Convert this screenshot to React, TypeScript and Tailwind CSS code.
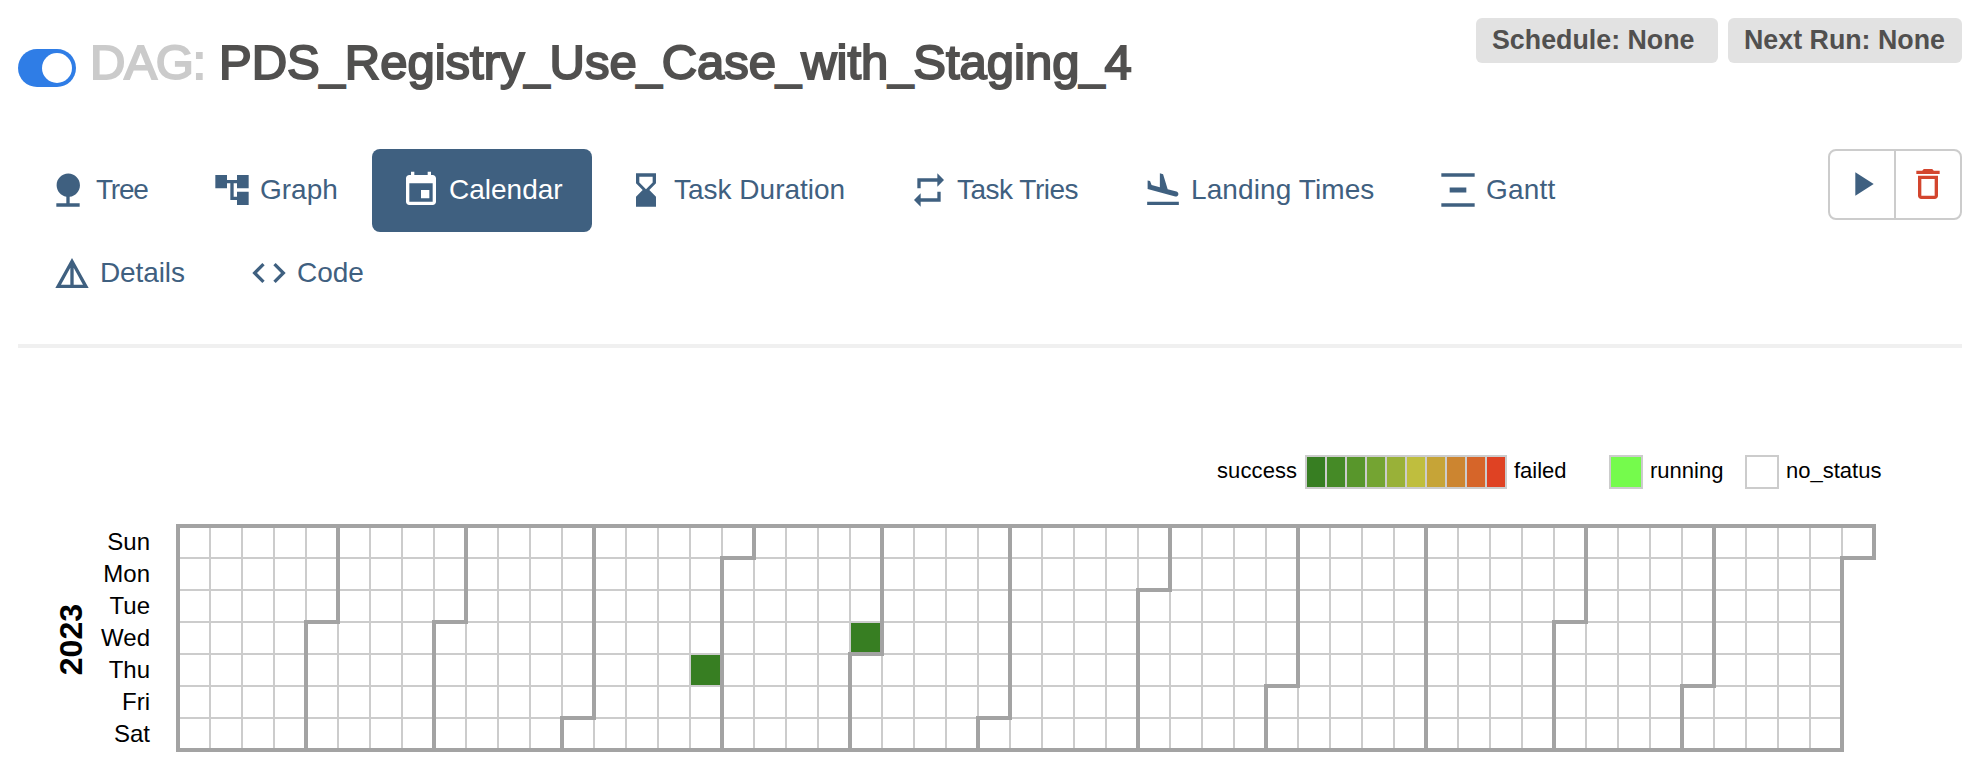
import React from "react";

type IconProps = { d: string; className?: string };

const Icon = ({ d, className = "" }: IconProps) => (
  <svg viewBox="0 0 24 24" fill="currentColor" className={`size-10 shrink-0 ${className}`}>
    <path d={d} />
  </svg>
);

const ICONS = {
  tree: "M13 16.12c3.47-.41 6.17-3.36 6.17-6.95 0-3.87-3.13-7-7-7s-7 3.13-7 7c0 3.47 2.52 6.34 5.83 6.89V20H5v2h14v-2h-6v-3.88z",
  graph: "M22 11V3h-7v3H9V3H2v8h7V8h2v10h4v3h7v-8h-7v3h-2V8h2v3z",
  calendar:
    "M17 12h-5v5h5v-5zM16 1v2H8V1H6v2H5c-1.11 0-1.99.9-1.99 2L3 19c0 1.1.89 2 2 2h14c1.1 0 2-.9 2-2V5c0-1.1-.9-2-2-2h-1V1h-2zm3 18H5V8h14v11z",
  hourglass: "m18 22-.01-6L14 12l3.99-4.01L18 2H6v6l4 4-4 3.99V22h12zM8 7.5V4h8v3.5l-4 4-4-4z",
  repeat: "M7 7h10v3l4-4-4-4v3H5v6h2V7zm10 10H7v-3l-4 4 4 4v-3h12v-6h-2v4z",
  landing:
    "M2.5 19h19v2h-19v-2zm16.84-3.15c.8.21 1.62-.26 1.84-1.06.21-.8-.26-1.62-1.06-1.84l-5.31-1.42-2.76-9.02L10.12 2v8.28L5.15 8.95l-.93-2.32-1.45-.39v5.17l16.57 4.44z",
  gantt: "M22 2v2H2V2h20zM7 10.5v3h10v-3H7zM2 20v2h20v-2H2z",
  details: "M12 3 2 21h20L12 3zm1 5.92L18.6 19H13V8.92zm-2 0V19H5.4L11 8.92z",
  code: "M9.4 16.6 4.8 12l4.6-4.6L8 6l-6 6 6 6 1.4-1.4zm5.2 0 4.6-4.6-4.6-4.6L16 6l6 6-6 6-1.4-1.4z",
  play: "M8 5v14l11-7z",
  trash:
    "M6 19c0 1.1.9 2 2 2h8c1.1 0 2-.9 2-2V7H6v12zM8 9h8v10H8V9zm7.5-5l-1-1h-5l-1 1H5v2h14V4z",
};

type TabProps = { icon: string; label: string; className: string; active?: boolean };

const Tab = ({ icon, label, className, active }: TabProps) => (
  <a
    className={`flex h-[83px] shrink-0 items-start rounded-lg pt-[21px] text-[28px] leading-10 whitespace-nowrap ${
      active ? "bg-[#3f6080] text-white" : "text-[#3f6080]"
    } ${className}`}
  >
    <Icon d={icon} />
    <span className="ml-2">{label}</span>
  </a>
);

const DAG_ID = "PDS_Registry_Use_Case_with_Staging_4";

const DagName = () => (
  <span>
    {DAG_ID.split("_").map((word, i) => (
      <React.Fragment key={i}>
        {i > 0 && <span className="text-[45px] leading-none">_</span>}
        {word}
      </React.Fragment>
    ))}
  </span>
);

const CELL = 32;
const MONTH_DAYS = [31, 28, 31, 30, 31, 30, 31, 31, 30, 31, 30, 31];
const DAYS = ["Sun", "Mon", "Tue", "Wed", "Thu", "Fri", "Sat"];
const SUCCESS_DAYS = [16 * 7 + 4, 21 * 7 + 3];
const GRADIENT = [
  "bg-[#377e22]",
  "bg-[#458a26]",
  "bg-[#58962b]",
  "bg-[#74a432]",
  "bg-[#99b138]",
  "bg-[#bfbe3e]",
  "bg-[#c6a437]",
  "bg-[#cc8530]",
  "bg-[#d66529]",
  "bg-[#df4223]",
];

const monthPaths = () => {
  let start = 0;
  return MONTH_DAYS.map((len) => {
    const end = start + len;
    const c0 = Math.floor(start / 7) * CELL;
    const r0 = (start % 7) * CELL;
    const c1 = Math.floor(end / 7) * CELL;
    const r1 = (end % 7) * CELL;
    start = end;
    return `M${c0 + CELL} ${r0}H${c0}V${7 * CELL}H${c1}V${r1}H${c1 + CELL}V0H${c0 + CELL}Z`;
  });
};

const YearGrid = () => (
  <svg width={1700} height={228} viewBox="-2 -2 1700 228" className="block shrink-0">
    <g stroke="#cccccc" strokeWidth={2}>
      {Array.from({ length: 365 }, (_, i) => (
        <rect
          key={i}
          x={Math.floor(i / 7) * CELL}
          y={(i % 7) * CELL}
          width={CELL}
          height={CELL}
          fill={SUCCESS_DAYS.includes(i) ? "#377e22" : "#ffffff"}
        />
      ))}
    </g>
    <g fill="none" stroke="#a3a3a3" strokeWidth={4}>
      {monthPaths().map((d) => (
        <path key={d} d={d} />
      ))}
    </g>
  </svg>
);

const Legend = () => (
  <div className="flex h-[34px] items-center pl-[1217px] text-[22px] leading-8 text-black">
    <span className="-mt-0.5 w-[88px] tracking-[0.1px]">success</span>
    <div className="flex h-[34px] gap-0.5 border-2 border-[#ccc] bg-[#ccc]">
      {GRADIENT.map((c) => (
        <span key={c} className={`w-[18px] ${c}`} />
      ))}
    </div>
    <span className="-mt-0.5 ml-[7px] w-[95px]">failed</span>
    <span className="size-[34px] border-2 border-[#ccc] bg-[#75fb4c]" />
    <span className="-mt-0.5 ml-[7px] w-[95px]">running</span>
    <span className="size-[34px] border-2 border-[#ccc] bg-white" />
    <span className="-mt-0.5 ml-[7px]">no_status</span>
  </div>
);

export default function App() {
  return (
    <div className="h-[784px] w-[1976px] overflow-hidden bg-white font-['Liberation_Sans',Arial,sans-serif]">
      <header className="flex h-[149px] items-start justify-between pr-3.5 pl-[18px]">
        <div className="flex pt-[35px]">
          <span className="mt-3.5 flex h-[38px] w-[58px] items-center justify-end rounded-full bg-[#2f7de6] pr-1">
            <span className="size-[30px] rounded-full bg-white" />
          </span>
          <h1 className="-mt-px ml-3.5 flex text-[49px] leading-[56px] whitespace-nowrap text-[#51504f] [-webkit-text-stroke:2px_currentColor]">
            <span className="w-[129px] tracking-[-1.2px] text-[#cbcbcb]">DAG:</span>
            <DagName />
          </h1>
        </div>
        <div className="flex gap-2.5 pt-[18px] text-[26.8px] leading-[45px] font-bold whitespace-nowrap text-[#51504f]">
          <span className="h-[45px] w-[242px] rounded-md bg-[#e2e2e2] pl-4">Schedule: None</span>
          <span className="h-[45px] w-[234px] rounded-md bg-[#e2e2e2] pl-4">Next Run: None</span>
        </div>
      </header>

      <div className="flex h-[195px] items-start justify-between pr-3.5">
        <nav>
          <div className="flex">
            <Tab icon={ICONS.tree} label="Tree" className="w-[193px] pl-12 tracking-[-1.2px]" />
            <Tab icon={ICONS.graph} label="Graph" className="w-[179px] pl-[19px]" />
            <Tab icon={ICONS.calendar} label="Calendar" className="w-[220px] pl-[29px]" active />
            <Tab icon={ICONS.hourglass} label="Task Duration" className="w-[282px] pl-[34px]" />
            <Tab icon={ICONS.repeat} label="Task Tries" className="w-[234px] pl-[35px] tracking-[-0.5px]" />
            <Tab icon={ICONS.landing} label="Landing Times" className="w-[296px] pl-[35px] tracking-[0.1px]" />
            <Tab icon={ICONS.gantt} label="Gantt" className="w-[160px] pl-[34px] tracking-[0.2px]" />
          </div>
          <div className="flex">
            <Tab icon={ICONS.details} label="Details" className="w-[214px] pl-[52px] tracking-[-0.1px]" />
            <Tab icon={ICONS.code} label="Code" className="pl-[35px]" />
          </div>
        </nav>
        <div className="flex h-[71px] w-[134px] rounded-lg border-2 border-[#ccc]">
          <button className="flex w-[66px] border-r-2 border-[#ccc] pt-[13px] pl-3 text-[#3f6080]">
            <Icon d={ICONS.play} />
          </button>
          <button className="flex pt-[13px] pl-3 text-[#d3452e]">
            <Icon d={ICONS.trash} />
          </button>
        </div>
      </div>

      <hr className="mr-3.5 ml-[18px] h-1 border-0 bg-[#f0f0f0]" />

      <main className="pt-[107px]">
        <Legend />
        <div className="mt-[35px] flex">
          <div className="flex h-[228px] w-[94px] items-center justify-end pt-[3px] pr-[5px]">
            <span className="rotate-180 text-[32px] leading-9 font-bold text-black [writing-mode:vertical-rl]">
              2023
            </span>
          </div>
          <ul className="w-14 pt-0.5 text-right text-2xl leading-8 text-black">
            {DAYS.map((d) => (
              <li key={d}>{d}</li>
            ))}
          </ul>
          <div className="ml-[26px]">
            <YearGrid />
          </div>
        </div>
      </main>
    </div>
  );
}
